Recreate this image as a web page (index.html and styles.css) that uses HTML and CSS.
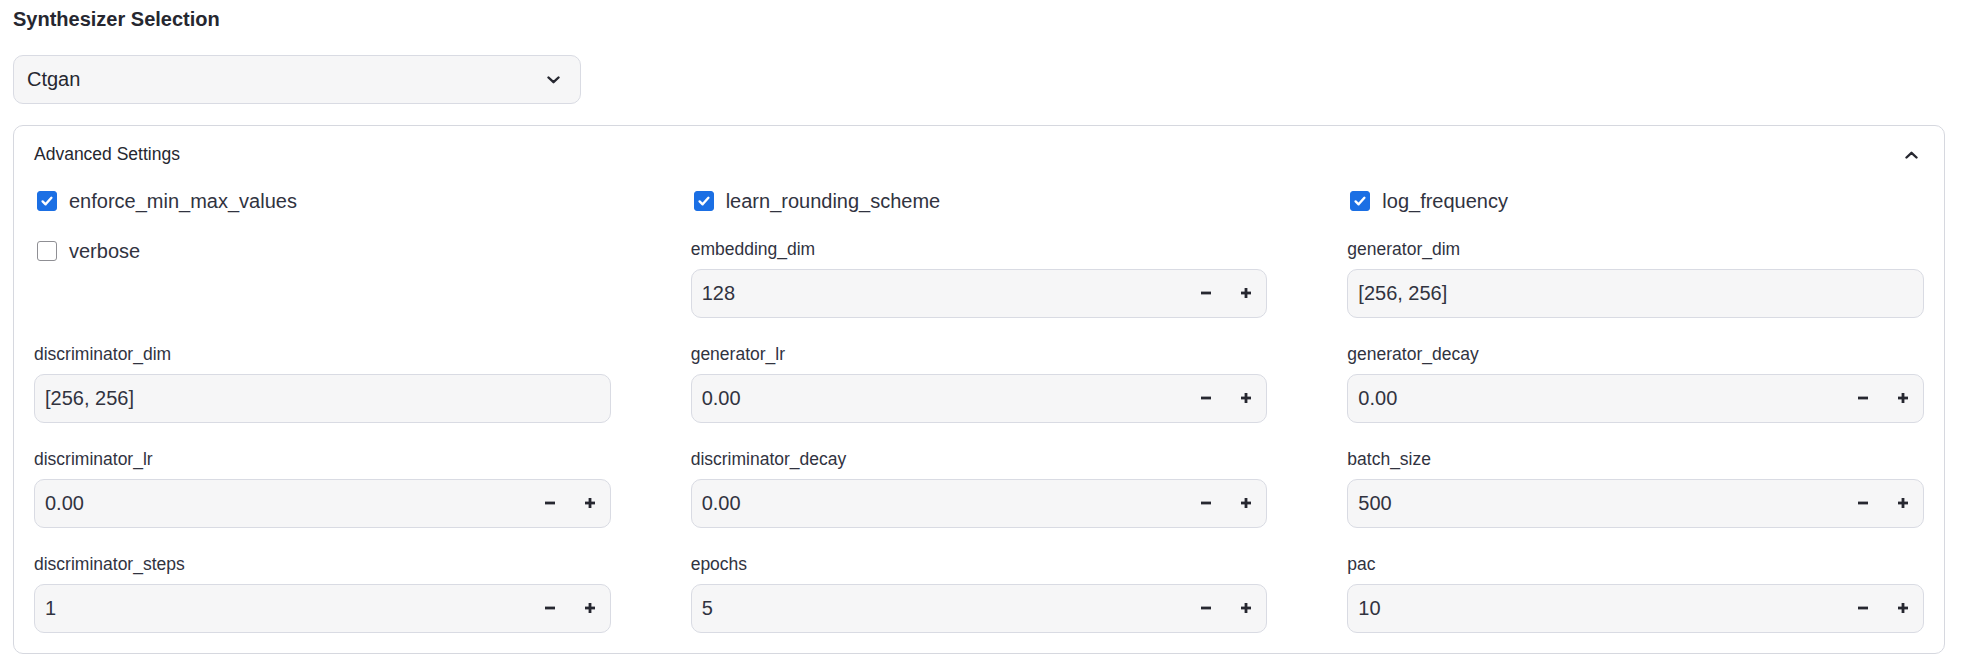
FILE: index.html
```html
<!DOCTYPE html>
<html lang="en">

<head>
    <meta charset="UTF-8">
    <meta name="viewport" content="width=device-width, initial-scale=1.0">
    <title>Synthesizer Selection</title>
    <link rel="stylesheet" href="styles.css">
</head>

<body>
    <div class="page">
        <h2 class="title">Synthesizer Selection</h2>
        <div class="select">
            <span class="select-value">Ctgan</span>
            <svg class="chev" width="13" height="8" viewBox="0 0 13 8"><path d="M1.5 1.5 L6.5 6.2 L11.5 1.5" fill="none" stroke="#262730" stroke-width="2.4" stroke-linecap="round" stroke-linejoin="round"/></svg>
        </div>

        <div class="card">
            <div class="card-head">
                <span>Advanced Settings</span>
                <svg class="chev" width="13" height="8" viewBox="0 0 13 8"><path d="M1.5 6.5 L6.5 1.8 L11.5 6.5" fill="none" stroke="#262730" stroke-width="2.4" stroke-linecap="round" stroke-linejoin="round"/></svg>
            </div>
            <div class="card-body">
                <label class="check"><span class="box on"><svg width="14" height="14" viewBox="0 0 14 14"><path d="M2.6 7.4 L5.6 10.3 L11.4 3.8" fill="none" stroke="#fff" stroke-width="2.4" stroke-linecap="round" stroke-linejoin="round"/></svg></span>enforce_min_max_values</label>
                <label class="check"><span class="box on"><svg width="14" height="14" viewBox="0 0 14 14"><path d="M2.6 7.4 L5.6 10.3 L11.4 3.8" fill="none" stroke="#fff" stroke-width="2.4" stroke-linecap="round" stroke-linejoin="round"/></svg></span>learn_rounding_scheme</label>
                <label class="check"><span class="box on"><svg width="14" height="14" viewBox="0 0 14 14"><path d="M2.6 7.4 L5.6 10.3 L11.4 3.8" fill="none" stroke="#fff" stroke-width="2.4" stroke-linecap="round" stroke-linejoin="round"/></svg></span>log_frequency</label>

                <label class="check"><span class="box"></span>verbose</label>
                <div class="field">
                    <div class="field-label">embedding_dim</div>
                    <div class="num"><input value="128"><button class="step"><svg width="10" height="10" viewBox="0 0 10 10"><rect x="0" y="3.6" width="10" height="2.8" fill="#262730"/></svg></button><button class="step"><svg width="10" height="10" viewBox="0 0 10 10"><rect x="0" y="3.6" width="10" height="2.8" fill="#262730"/><rect x="3.6" y="0" width="2.8" height="10" fill="#262730"/></svg></button></div>
                </div>
                <div class="field">
                    <div class="field-label">generator_dim</div>
                    <div class="num"><input value="[256, 256]"></div>
                </div>

                <div class="field">
                    <div class="field-label">discriminator_dim</div>
                    <div class="num"><input value="[256, 256]"></div>
                </div>
                <div class="field">
                    <div class="field-label">generator_lr</div>
                    <div class="num"><input value="0.00"><button class="step"><svg width="10" height="10" viewBox="0 0 10 10"><rect x="0" y="3.6" width="10" height="2.8" fill="#262730"/></svg></button><button class="step"><svg width="10" height="10" viewBox="0 0 10 10"><rect x="0" y="3.6" width="10" height="2.8" fill="#262730"/><rect x="3.6" y="0" width="2.8" height="10" fill="#262730"/></svg></button></div>
                </div>
                <div class="field">
                    <div class="field-label">generator_decay</div>
                    <div class="num"><input value="0.00"><button class="step"><svg width="10" height="10" viewBox="0 0 10 10"><rect x="0" y="3.6" width="10" height="2.8" fill="#262730"/></svg></button><button class="step"><svg width="10" height="10" viewBox="0 0 10 10"><rect x="0" y="3.6" width="10" height="2.8" fill="#262730"/><rect x="3.6" y="0" width="2.8" height="10" fill="#262730"/></svg></button></div>
                </div>

                <div class="field">
                    <div class="field-label">discriminator_lr</div>
                    <div class="num"><input value="0.00"><button class="step"><svg width="10" height="10" viewBox="0 0 10 10"><rect x="0" y="3.6" width="10" height="2.8" fill="#262730"/></svg></button><button class="step"><svg width="10" height="10" viewBox="0 0 10 10"><rect x="0" y="3.6" width="10" height="2.8" fill="#262730"/><rect x="3.6" y="0" width="2.8" height="10" fill="#262730"/></svg></button></div>
                </div>
                <div class="field">
                    <div class="field-label">discriminator_decay</div>
                    <div class="num"><input value="0.00"><button class="step"><svg width="10" height="10" viewBox="0 0 10 10"><rect x="0" y="3.6" width="10" height="2.8" fill="#262730"/></svg></button><button class="step"><svg width="10" height="10" viewBox="0 0 10 10"><rect x="0" y="3.6" width="10" height="2.8" fill="#262730"/><rect x="3.6" y="0" width="2.8" height="10" fill="#262730"/></svg></button></div>
                </div>
                <div class="field">
                    <div class="field-label">batch_size</div>
                    <div class="num"><input value="500"><button class="step"><svg width="10" height="10" viewBox="0 0 10 10"><rect x="0" y="3.6" width="10" height="2.8" fill="#262730"/></svg></button><button class="step"><svg width="10" height="10" viewBox="0 0 10 10"><rect x="0" y="3.6" width="10" height="2.8" fill="#262730"/><rect x="3.6" y="0" width="2.8" height="10" fill="#262730"/></svg></button></div>
                </div>

                <div class="field">
                    <div class="field-label">discriminator_steps</div>
                    <div class="num"><input value="1"><button class="step"><svg width="10" height="10" viewBox="0 0 10 10"><rect x="0" y="3.6" width="10" height="2.8" fill="#262730"/></svg></button><button class="step"><svg width="10" height="10" viewBox="0 0 10 10"><rect x="0" y="3.6" width="10" height="2.8" fill="#262730"/><rect x="3.6" y="0" width="2.8" height="10" fill="#262730"/></svg></button></div>
                </div>
                <div class="field">
                    <div class="field-label">epochs</div>
                    <div class="num"><input value="5"><button class="step"><svg width="10" height="10" viewBox="0 0 10 10"><rect x="0" y="3.6" width="10" height="2.8" fill="#262730"/></svg></button><button class="step"><svg width="10" height="10" viewBox="0 0 10 10"><rect x="0" y="3.6" width="10" height="2.8" fill="#262730"/><rect x="3.6" y="0" width="2.8" height="10" fill="#262730"/></svg></button></div>
                </div>
                <div class="field">
                    <div class="field-label">pac</div>
                    <div class="num"><input value="10"><button class="step"><svg width="10" height="10" viewBox="0 0 10 10"><rect x="0" y="3.6" width="10" height="2.8" fill="#262730"/></svg></button><button class="step"><svg width="10" height="10" viewBox="0 0 10 10"><rect x="0" y="3.6" width="10" height="2.8" fill="#262730"/><rect x="3.6" y="0" width="2.8" height="10" fill="#262730"/></svg></button></div>
                </div>
            </div>
        </div>
    </div>
</body>

</html>
```

FILE: styles.css
```css
body {
    margin: 0;
    background: #fff;
    color: #31333f;
    font-family: "Liberation Sans", Arial, sans-serif;
}

.page {
    padding: 7px 17px 0 13px;
}

.title {
    margin: 0;
    font-size: 20px;
    line-height: 24px;
    font-weight: bold;
    color: #262730;
}

.select {
    display: flex;
    align-items: center;
    justify-content: space-between;
    box-sizing: border-box;
    width: 568px;
    height: 49px;
    margin-top: 24px;
    padding: 0 20px 0 13px;
    background: #f6f6f7;
    border: 1px solid #d9dbe3;
    border-radius: 10px;
    font-size: 20px;
    color: #262730;
}

.card {
    margin-top: 21px;
    border: 1px solid #d6d8df;
    border-radius: 10px;
}

.card-head {
    display: flex;
    align-items: center;
    justify-content: space-between;
    padding: 18px 26px 0 20px;
    font-size: 17.5px;
    line-height: 21px;
    color: #262730;
}

.card-body {
    display: grid;
    grid-template-columns: repeat(3, 1fr);
    column-gap: 80px;
    row-gap: 26px;
    align-items: start;
    padding: 23.5px 20px 20px 20px;
}

.check {
    display: flex;
    align-items: center;
    font-size: 20px;
    line-height: 24px;
    color: #31333f;
}

.box {
    display: flex;
    align-items: center;
    justify-content: center;
    box-sizing: border-box;
    width: 20px;
    height: 20px;
    margin: 0 12px 0 3px;
    border: 1.5px solid #8f8f94;
    border-radius: 3px;
    background: #fff;
}

.box.on {
    background: #1b6fe4;
    border-color: #1b6fe4;
}

.field-label {
    font-size: 17.5px;
    line-height: 21px;
    margin-bottom: 9px;
    color: #31333f;
}

.num {
    display: flex;
    align-items: center;
    box-sizing: border-box;
    height: 49px;
    background: #f6f6f7;
    border: 1px solid #d9dbe3;
    border-radius: 10px;
}

.num input {
    flex: 1;
    min-width: 0;
    height: 100%;
    padding: 0 0 0 10px;
    border: none;
    outline: none;
    background: transparent;
    font-family: inherit;
    font-size: 20px;
    color: #31333f;
}

.step {
    display: flex;
    align-items: center;
    justify-content: center;
    width: 40px;
    height: 100%;
    padding: 0;
    border: none;
    background: transparent;
}
```
